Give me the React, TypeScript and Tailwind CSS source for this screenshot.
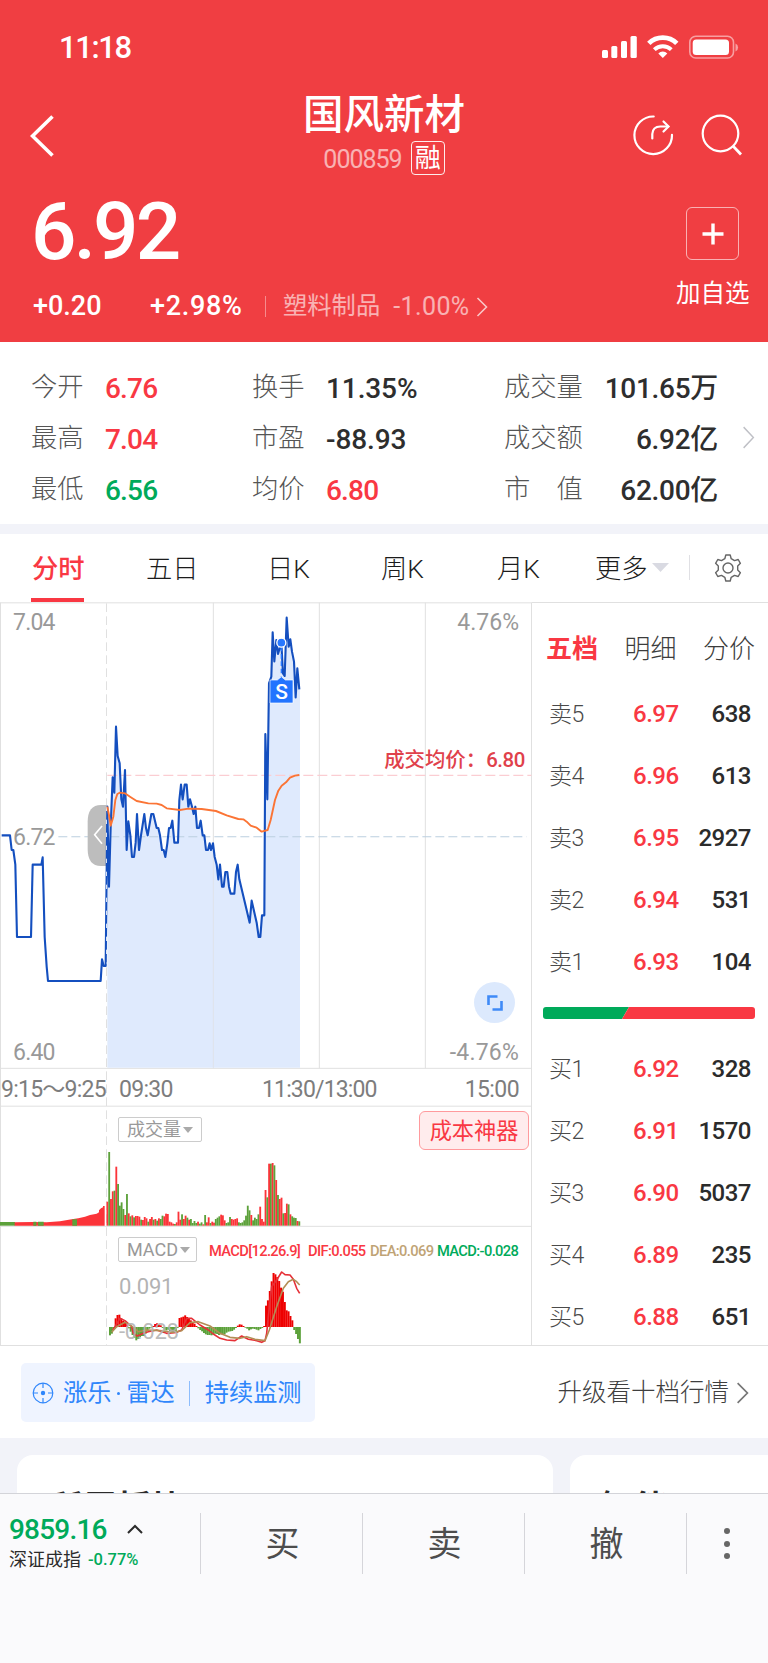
import type { ReactNode } from "react";

type Pt = [number, number];

const PRICE: Pt[] = [
  [5, 2506], [30, 2506], [35, 2550], [40, 2550], [46, 2594], [51, 2811], [93, 2811], [98, 2594], [124, 2594],
  [128, 2572], [134, 2811], [140, 2900], [144, 2943], [302, 2943], [306, 2878], [311, 2898], [317, 2898],
  [322, 2420], [327, 2660], [332, 2480], [338, 2332], [343, 2378], [348, 2180], [353, 2268], [359, 2290],
  [364, 2398], [369, 2420], [375, 2310], [380, 2550], [385, 2464], [391, 2506], [396, 2571], [402, 2571],
  [407, 2528], [411, 2442], [417, 2550], [423, 2506], [433, 2442], [438, 2484], [443, 2506], [454, 2442],
  [460, 2442], [470, 2484], [475, 2484], [480, 2506], [486, 2550], [491, 2550], [496, 2571], [502, 2530],
  [507, 2484], [512, 2484], [517, 2462], [523, 2528], [534, 2528], [538, 2400], [543, 2354], [548, 2398],
  [554, 2354], [560, 2354], [565, 2420], [570, 2398], [576, 2420], [581, 2442], [586, 2420], [591, 2484],
  [597, 2484], [602, 2462], [608, 2506], [613, 2506], [618, 2550], [624, 2550], [629, 2530], [633, 2550],
  [639, 2530], [644, 2571], [650, 2594], [655, 2638], [660, 2594], [666, 2660], [671, 2660], [676, 2616],
  [682, 2616], [687, 2660], [692, 2681], [703, 2681], [708, 2616], [713, 2594], [718, 2638], [749, 2768],
  [755, 2702], [770, 2768], [776, 2811], [781, 2811], [786, 2746], [793, 2746], [796, 2202], [802, 2398],
  [807, 2050], [814, 2030], [818, 1897], [823, 1984], [829, 1920], [834, 1962], [844, 1928], [849, 2020],
  [854, 2028], [860, 1853], [866, 1940], [871, 1918], [876, 1955], [882, 1985], [887, 2092], [892, 2005],
  [898, 2068],
];

const AVERAGE: Pt[] = [
  [322, 2420], [327, 2445], [332, 2477], [340, 2450], [346, 2400], [352, 2382], [360, 2378], [375, 2380],
  [390, 2390], [410, 2403], [445, 2410], [470, 2411], [485, 2415], [500, 2425], [540, 2430], [565, 2426],
  [605, 2427], [648, 2433], [680, 2446], [715, 2457], [730, 2458], [740, 2465], [752, 2477], [770, 2483],
  [785, 2495], [803, 2490], [812, 2460], [825, 2400], [835, 2372], [845, 2357], [858, 2347], [870, 2333],
  [885, 2327], [898, 2325],
];

const DIF: Pt[] = [
  [338, 690], [345, 680], [360, 655], [375, 662], [395, 680], [400, 700], [412, 708], [430, 700], [445, 695],
  [470, 690], [500, 700], [530, 697], [545, 690], [560, 655], [575, 655], [600, 675], [625, 690], [640, 702],
  [660, 715], [680, 720], [705, 722], [725, 708], [745, 718], [770, 722], [785, 727], [795, 722], [800, 700],
  [805, 650], [815, 560], [830, 540], [845, 516], [855, 524], [870, 525], [880, 538], [890, 565], [899, 580],
];

const DEA: Pt[] = [
  [335, 697], [350, 680], [375, 667], [395, 678], [415, 695], [440, 690], [480, 692], [520, 697], [545, 692],
  [570, 668], [595, 665], [630, 678], [660, 700], [690, 712], [720, 715], [740, 710], [765, 718], [795, 722],
  [808, 690], [830, 620], [850, 565], [865, 545], [880, 538], [890, 545], [899, 555],
];

// Volume per minute: positive values are up bars, negative ones are down bars.
const VOLUME = [
  72, -221, 80, 103, -105, 177, -125, -60, -70, -50, 32, -95, 37, -28, 31, -25, 29, 29, 27, -18, 17, 26, 22, -12,
  20, 26, -18, 20, -15, 22, -20, -30, 28, 36, 35, 12, 10, 6, -5, 10, 42, 18, -34, 20, 30, -24, 18, -20, -8,
  -14, -8, 12, -6, -10, 4, -32, 10, 25, -8, 12, 9, -20, -24, -28, 33, 31, 16, -8, -10, -26, 20, 18, 20, 22, -10,
  -8, -10, -16, -30, -60, -46, 32, -16, -24, -20, -34, 57, 20, 12, 107, -85, 186, -186, 188, -181, 137, -92, 80, 84,
  -37, 38, 66, -64, 34, -28, -24, -23, 14, -13,
];

const MACD = [
  -25, -20, -3, 26, 36, 37, 26, 18, 16, 8, -4, -14, -24, -32, -40, -36, -30, -27, -27, -20, -12, -5, -2, 3, 9, 11,
  8, 5, -3, -8, -10, -8, -12, -14, -16, -12, -3, 27, 29, 31, 35, 30, 26, 20, 14, 10, 3, -4, -9, -13, -18, -22, -24,
  -24, -25, -24, -20, -21, -24, -22, -23, -22, -17, -14, -13, -12, -8, -3, 4, 8, 7, 3, -2, -5, -10, -7, -5, -6, -8,
  -10, -6, -3, 3, 64, 80, 108, 137, 162, 158, 150, 138, 118, 106, 75, 50, 47, 33, 20, -9, -21, -36, -49,
];

const line = (pts: Pt[]) => pts.map((p) => p.join(",")).join(" ");

function Chevron({ className, width = 1.6 }: { className: string; width?: number }) {
  return (
    <svg className={className} viewBox="0 0 12 20" preserveAspectRatio="none" fill="none" stroke="currentColor" strokeWidth={width}>
      <path d="M1.5 1 10.5 10 1.5 19" />
    </svg>
  );
}

function Caret({ className }: { className: string }) {
  return (
    <svg className={className} viewBox="0 0 16 9" preserveAspectRatio="none" fill="currentColor">
      <path d="M0 0h16L8 9z" />
    </svg>
  );
}

function StatusBar() {
  return (
    <div className="flex h-[94px] items-center justify-between pr-[29px] pl-[59px]">
      <span className="text-[31px] leading-none font-medium tracking-[-1.4px]">11:18</span>
      <svg className="h-[24px] w-[138px]" viewBox="601 35 138 24" fill="white">
        <rect x="602" y="50" width="6" height="8" rx="1.5" />
        <rect x="611.3" y="46" width="6" height="12" rx="1.5" />
        <rect x="621" y="41" width="6" height="17" rx="1.5" />
        <rect x="630.5" y="36" width="6.3" height="22" rx="1.5" />
        <g fill="none" stroke="white">
          <path d="M648.8 43.4a20 20 0 0 1 28 0" strokeWidth="4.8" />
          <path d="M654.3 49.6a12.500 12.500 0 0 1 17 0" strokeWidth="4" />
        </g>
        <path d="M662.8 58l-4.500-4.600a6.500 6.500 0 0 1 9 0z" />
        <rect x="689.8" y="36.300" width="43.700" height="21.700" rx="6" fill="none" stroke="white" strokeOpacity=".5" strokeWidth="1.600" />
        <rect x="692.7" y="39.500" width="36.300" height="15.500" rx="3.500" />
        <path d="M735.500 43.500q2.600 1.200 2.600 4t-2.600 4z" opacity=".5" />
      </svg>
    </div>
  );
}

function Header() {
  return (
    <header className="flex h-[342px] flex-col bg-[#f03e42] text-white">
      <StatusBar />
      <div className="flex h-[84px] items-start justify-between pr-[25px] pl-[30px]">
        <svg className="mt-[21px] h-[42px] w-[26px]" viewBox="0 0 26 42" fill="none" stroke="white" strokeWidth="3.600">
          <path d="M22.500 1.500 2.500 21l20 19.500" />
        </svg>
        <div className="ml-[80px] flex flex-col items-center">
          <h1 className="mt-[2px] text-[40.500px] leading-[38px] font-medium">国风新材</h1>
          <div className="mt-[7px] flex items-center gap-[9px]">
            <span className="mt-[2px] text-[25px] leading-none tracking-[-1px] opacity-60">000859</span>
            <span className="flex h-[34px] w-[34px] items-center justify-center rounded-[4px] border border-white/90 text-[26px] leading-none">
              融
            </span>
          </div>
        </div>
        <div className="mt-[20px] flex gap-[27px]">
          <svg className="h-[42px] w-[42px]" viewBox="632 114 42 42" fill="none" stroke="white" strokeWidth="2.200" strokeLinecap="round">
            <path d="M653.700 116.500a18.800 18.800 0 1 0 18.300 18.300" />
            <path d="M652.300 138.500v-4.500q.5-7.500 8-7.500h8" />
            <path d="M663.500 121.500l5 5-5 5" />
          </svg>
          <svg className="h-[42px] w-[42px]" viewBox="701 114 42 42" fill="none" stroke="white" strokeWidth="2.200">
            <circle cx="720.500" cy="133.500" r="17.800" />
            <path d="M733 146l8 8.500" strokeWidth="2.800" />
          </svg>
        </div>
      </div>
      <div className="flex flex-1 justify-between pr-[18.500px] pl-[33px]">
        <div className="flex flex-col">
          <div className="mt-[14px] -ml-[2px] text-[80px] leading-[80px] font-medium tracking-[-2.800px]">6.92</div>
          <div className="mt-[20px] flex h-[29px] items-center leading-none">
            <span className="w-[117px] text-[27px] font-medium">+0.20</span>
            <span className="w-[115px] text-[27px] font-medium tracking-[.7px]">+2.98%</span>
            <span className="h-[21px] w-px bg-white/40" />
            <span className="ml-[17px] text-[24.300px] opacity-60">塑料制品</span>
            <span className="ml-[13px] text-[25px] tracking-[.4px] opacity-60">-1.00%</span>
            <Chevron className="ml-[6px] h-[20px] w-[12px] opacity-70" />
          </div>
        </div>
        <div className="mt-[29px] flex flex-col items-center">
          <div className="flex size-[53px] items-center justify-center rounded-[6px] border border-white/60">
            <svg className="size-[22px]" viewBox="0 0 22 22" stroke="white" strokeWidth="3.400">
              <path d="M11 .5v21M.5 11h21" />
            </svg>
          </div>
          <span className="mt-[22px] text-[24.500px] leading-none">加自选</span>
        </div>
      </div>
    </header>
  );
}

const RED = "text-[#f93843]";
const GREEN = "text-[#00aa5a]";
const DARK = "text-[#2e2e2e]";

const STATS = [
  ["今开", "6.76", RED, "换手", "11.35%", DARK, "成交量", "101.65万"],
  ["最高", "7.04", RED, "市盈", "-88.93", DARK, "成交额", "6.92亿"],
  ["最低", "6.56", GREEN, "均价", "6.80", RED, "市　值", "62.00亿"],
];

function StatLabel({ className, children }: { className: string; children: ReactNode }) {
  return <span className={`mb-[4px] text-[26.300px] font-light tracking-normal text-[#555] ${className}`}>{children}</span>;
}

function Stats() {
  return (
    <section className="flex h-[182px] items-center justify-between bg-white pt-[8px] pr-[13px] pl-[31px]">
      <div className="mt-[6px] flex flex-col">
        {STATS.map((r) => (
          <div key={r[0]} className="flex h-[51.300px] items-center text-[28px] leading-none font-medium tracking-[-.3px]">
            <StatLabel className="w-[74px]">{r[0]}</StatLabel>
            <span className={`w-[147px] tracking-[-.8px] ${r[2]}`}>{r[1]}</span>
            <StatLabel className="w-[74px]">{r[3]}</StatLabel>
            <span className={`w-[178px] ${r[5] === RED ? "tracking-[-.8px]" : "tracking-[-.1px]"} ${r[5]}`}>{r[4]}</span>
            <StatLabel className="w-[84px]">{r[6]}</StatLabel>
            <span className="w-[130px] text-right text-[#2e2e2e]">{r[7]}</span>
          </div>
        ))}
      </div>
      <Chevron className="h-[23px] w-[13px] text-[#bfc0c6]" width={1.3} />
    </section>
  );
}

function Tabs() {
  return (
    <nav className="flex h-[68px] items-start bg-white pl-[31px] text-[26.300px] leading-[70px] font-light text-[#1c1c1c]">
      <span className={`h-[68px] w-[53px] border-b-4 border-[#f93843] pl-px font-medium whitespace-nowrap ${RED}`}>分时</span>
      <span className="ml-[62px] w-[53px]">五日</span>
      <span className="ml-[68px] w-[43px]">日K</span>
      <span className="ml-[71px] w-[43px]">周K</span>
      <span className="ml-[73px] w-[43px]">月K</span>
      <span className="ml-[55px] w-[53px]">更多</span>
      <Caret className="mt-[29px] ml-[4px] h-[9px] w-[17px] text-[#d9dae2]" />
      <span className="mt-[21px] ml-[20px] h-[25px] w-px bg-[#e0e0e4]" />
      <svg className="mt-[20px] ml-[24px] h-[28px] w-[28px]" viewBox="0 0 28 28" fill="none" stroke="#666" strokeWidth="1.400" strokeLinejoin="round">
        <path d="M11.800 1h4.400l1 3.700 3.300 1.900 3.700-1.100 2.200 3.800-2.700 2.700v4l2.700 2.700-2.200 3.800-3.700-1.100-3.300 1.900-1 3.700h-4.400l-1-3.700-3.300-1.900-3.700 1.100-2.200-3.800L4.300 16v-4L1.600 9.300l2.200-3.800 3.700 1.100 3.300-1.900z" />
        <circle cx="14" cy="14" r="5" />
      </svg>
    </nav>
  );
}

function Tag({ className, children }: { className: string; children: ReactNode }) {
  return <span className={`absolute whitespace-nowrap leading-none ${className}`}>{children}</span>;
}

function Chart() {
  return (
    <div className="relative h-[744px] w-[532px]">
      <svg className="h-[744px] w-[532px]" viewBox="0 1806 1596 2232" fill="none">
        <g stroke="#e0e0e0" strokeWidth="3">
          <path d="M0 1808.500H1596M0 3205H1596M0 3318.500H1596M0 3679H1596M0 4036.500H1596" />
          <path d="M1.500 1808V4037M1594.500 1808V4037M640 1808V3205M958 1808V3205M1276 1808V3205" />
          <path d="M319.500 1810V4035" strokeDasharray="26 13" />
        </g>
        <polygon points={`322,3203 ${line(PRICE.slice(17))} 900,2068 900,3203`} fill="#dfeafd" />
        <path d="M640 2530V3203" stroke="#dfe2ea" strokeWidth="3" />
        <path d="M322 2326H1594" stroke="#fbcdd2" strokeWidth="3.500" strokeDasharray="30 12" />
        <path d="M175 2510H1580" stroke="#bccfe0" strokeWidth="3.200" strokeDasharray="27 12" />
        <path d="M263 2466q0-51 40-51h17v183h-17q-40 0-40-51z" fill="#bdbdbd" />
        <path d="M306 2478 284 2504 306 2531" stroke="#fff" strokeWidth="5" />
        <polyline points={line(PRICE)} stroke="#144fbf" strokeWidth="6.300" strokeLinejoin="round" />
        <path d="M319.500 2420V2890" stroke="#fff" strokeWidth="2.500" strokeDasharray="13 26" />
        <polyline points={line(AVERAGE)} stroke="#fb7435" strokeWidth="5.700" strokeLinejoin="round" />
        <path d="M844 1940V2030" stroke="#2878ff" strokeWidth="4" strokeDasharray="14 8" />
        <circle cx="844" cy="1928" r="13.500" fill="#2878ff" stroke="#fff" strokeWidth="4" />
        <path d="M810 2040H832L844 2030 856 2040H879V2109H810z" fill="#2274ff" stroke="#fff" strokeWidth="2" />
        <path d="M0 3677V3666H45V3677z" fill="#5ca13a" />
        <path
          d="M44 3677V3667L100 3666 140 3667 180 3664 215 3658 235 3655 255 3650 270 3645 290 3641 297 3637 297 3631 303 3625 309 3622 309 3618 314 3618V3677z"
          fill="#fb3439"
        />
        <path d="M100 3677V3665H109V3677zM114 3677V3665H131V3677zM217 3677V3658H231V3677z" fill="#5ca13a" />
        {VOLUME.map((v, i) => (
          <rect key={i} x={319.5 + i * 5.33} y={3677 - Math.abs(v)} width="5.500" height={Math.abs(v)} fill={v > 0 ? "#fb3439" : "#5ca13a"} />
        ))}
        {MACD.map((v, i) => (
          <rect key={i} x={327 + i * 5.64} y={v > 0 ? 3981 - v : 3981} width="5.900" height={Math.abs(v)} fill={v > 0 ? "#ee0000" : "#5ca13a"} />
        ))}
        <g transform="translate(0 3300)" strokeWidth="4.800" strokeLinejoin="round">
          <polyline points={line(DIF)} stroke="#e63037" />
          <polyline points={line(DEA)} stroke="#b38d55" />
        </g>
      </svg>

      <Tag className="top-[9px] left-[13px] text-[23px] tracking-[-.8px] text-[#999]">7.04</Tag>
      <Tag className="top-[224px] left-[13px] text-[23px] tracking-[-.8px] text-[#999]">6.72</Tag>
      <Tag className="top-[439px] left-[13px] text-[23px] tracking-[-.8px] text-[#999]">6.40</Tag>
      <Tag className="top-[9px] right-[13px] text-[23px] text-[#999]">4.76%</Tag>
      <Tag className="top-[439px] right-[13px] text-[23px] tracking-[.2px] text-[#999]">-4.76%</Tag>
      <Tag className="top-[148px] right-[7px] flex text-[20.400px] font-medium text-[#e0414b]">
        <span>成交均价：</span>
        <span className="tracking-[-.4px]">6.80</span>
      </Tag>
      <Tag className="top-[79.500px] left-[271px] w-[21px] text-center text-[21px] font-medium text-white">S</Tag>
      <span className="absolute top-[380px] left-[474px] flex size-[41px] items-center justify-center rounded-full bg-[#dce9fd]">
        <svg className="size-[16px]" viewBox="0 0 16 16" fill="none" stroke="#3f8af7" strokeWidth="2.600">
          <path d="M1.500 10V1.500H10.500M14.500 6v8.500H5.500" />
        </svg>
      </span>

      <Tag className="top-[475.500px] left-[1px] text-[23px] tracking-[-.75px] text-[#7d7d7d]">9:15～9:25</Tag>
      <Tag className="top-[475.500px] left-[119px] text-[23px] tracking-[-.7px] text-[#7d7d7d]">09:30</Tag>
      <Tag className="top-[475.500px] left-[262px] text-[23px] tracking-[-.85px] text-[#7d7d7d]">11:30/13:00</Tag>
      <Tag className="top-[475.500px] right-[13px] text-[23px] tracking-[-.6px] text-[#7d7d7d]">15:00</Tag>

      <Tag className="top-[515px] left-[118px] flex h-[25px] w-[84px] items-center rounded-[2px] border border-[#ccc] bg-white pl-[8px] text-[18px] text-[#999]">
        成交量
        <Caret className="ml-[2px] h-[6px] w-[10px] text-[#aaa]" />
      </Tag>
      <Tag className="top-[509px] left-[419px] flex h-[39px] w-[110px] items-center justify-center rounded-[6px] border border-[#ff9a9d] bg-[#ffeced] pt-px text-[22.200px] text-[#f93843]">
        成本神器
      </Tag>
      <Tag className="top-[635px] left-[118px] flex h-[25px] w-[79px] items-center rounded-[2px] border border-[#ccc] bg-white pl-[8px] text-[18px] text-[#999]">
        MACD
        <Caret className="ml-[2px] h-[6px] w-[10px] text-[#aaa]" />
      </Tag>
      <Tag className="top-[641.500px] left-[209px] flex text-[14.700px] font-medium tracking-[-.62px]">
        <span className="w-[99px] tracking-[-.65px] text-[#f93843]">MACD[12.26.9]</span>
        <span className="w-[62px] text-[#f93843]">DIF:0.055</span>
        <span className="w-[67px] text-[#bfa375]">DEA:0.069</span>
        <span className="text-[#00aa5a]">MACD:-0.028</span>
      </Tag>
      <Tag className="top-[674px] left-[119px] text-[22px] tracking-[-.2px] text-[#b3b3b3]">0.091</Tag>
      <Tag className="top-[719px] left-[119px] text-[22px] tracking-[-.3px] text-[#b3b3b3]/90">-0.028</Tag>
    </div>
  );
}

const ASKS = [
  ["卖5", "6.97", "638"],
  ["卖4", "6.96", "613"],
  ["卖3", "6.95", "2927"],
  ["卖2", "6.94", "531"],
  ["卖1", "6.93", "104"],
];

const BIDS = [
  ["买1", "6.92", "328"],
  ["买2", "6.91", "1570"],
  ["买3", "6.90", "5037"],
  ["买4", "6.89", "235"],
  ["买5", "6.88", "651"],
];

function Level({ row }: { row: string[] }) {
  return (
    <div className="flex h-[62px] items-center pr-[17px] pl-[17px] text-[24px] leading-none font-medium tracking-[-.5px]">
      <span className="w-[84px] text-[23px] font-light text-[#4a4a4a]">{row[0]}</span>
      <span className={`w-[46px] ${RED}`}>{row[1]}</span>
      <span className="flex-1 text-right text-[#2b2b2b]">{row[2]}</span>
    </div>
  );
}

function OrderBook() {
  return (
    <aside className="h-[744px] flex-1 border-y border-[#e0e0e0] bg-white">
      <div className="mt-[33px] flex justify-between pr-[13px] pl-[14px] text-[26px] leading-[26px] font-light text-[#3c3c3c]">
        <span className={`font-bold ${RED}`}>五档</span>
        <span>明细</span>
        <span>分价</span>
      </div>
      <div className="mt-[21px]">
        {ASKS.map((r) => (
          <Level key={r[0]} row={r} />
        ))}
      </div>
      <svg className="mt-[14px] ml-[11px] h-[12px] w-[212px] rounded-[3px]" viewBox="0 0 212 12">
        <path d="M0 0H86L79 12H0z" fill="#00aa5a" />
        <path d="M86 0H212V12H79z" fill="#f93843" />
      </svg>
      <div className="mt-[19px]">
        {BIDS.map((r) => (
          <Level key={r[0]} row={r} />
        ))}
      </div>
    </aside>
  );
}

function Radar() {
  return (
    <section className="flex h-[92px] items-center justify-between bg-white pt-px pr-[19px] pl-[21px]">
      <div className="flex h-[59px] w-[294px] items-center rounded-[5px] bg-[#eff4ff] pt-px pl-[11px] text-[24.200px] leading-none whitespace-nowrap text-[#2f86fb]">
        <svg className="size-[22px]" viewBox="0 0 22 22" fill="none" stroke="currentColor" strokeWidth="1.200">
          <circle cx="11" cy="11" r="9.800" />
          <path d="M11 1v5M11 16v5M1 11h5M16 11h5" />
          <circle cx="11" cy="11" r="2.200" fill="currentColor" stroke="none" />
        </svg>
        <span className="ml-[9px]">涨乐</span>
        <span className="mx-[6px] size-[3px] rounded-full bg-[#2f86fb]" />
        <span>雷达</span>
        <span className="ml-[14px] h-[25px] w-px bg-[#8dbdfd]" />
        <span className="ml-[15px]">持续监测</span>
      </div>
      <div className="flex items-center pt-px text-[24.500px] leading-none font-light text-[#3f3f3f]">
        升级看十档行情
        <Chevron className="ml-[7px] h-[22px] w-[13px] text-[#777]" />
      </div>
    </section>
  );
}

function Cards() {
  return (
    <section className="flex h-[55px] gap-[17px] overflow-hidden bg-[#f2f3f9] pt-[17px] pl-[17px] text-[34px] leading-[34px] font-bold text-[#2b2b2b]">
      <div className="h-[80px] w-[536px] shrink-0 rounded-t-[16px] bg-white pt-[36px] pl-[32px]">所属板块</div>
      <div className="h-[80px] w-[260px] shrink-0 rounded-t-[16px] bg-white pt-[36px] pl-[31px]">智能</div>
    </section>
  );
}

function ActionBar() {
  return (
    <footer className="flex flex-1 items-start border-t border-[#d3d4d9] bg-[#fafafc] pt-[19px]">
      <div className="flex h-[61px] w-[200px] flex-col pl-[9px]">
        <div className={`mt-[3px] flex items-center text-[28px] leading-[28px] font-medium tracking-[-.8px] ${GREEN}`}>
          9859.16
          <svg className="mb-[3px] ml-[20px] h-[10px] w-[16px]" viewBox="0 0 16 10" fill="none" stroke="#2b2b2b" strokeWidth="2">
            <path d="M1 9 8 2l7 7" />
          </svg>
        </div>
        <div className="mt-[6px] flex items-center gap-[7px] text-[18px] leading-[20px] text-[#2b2b2b]">
          深证成指
          <span className={`text-[16.500px] font-medium ${GREEN}`}>-0.77%</span>
        </div>
      </div>
      {["买", "卖", "撤"].map((t) => (
        <button key={t} className="flex h-[61px] w-[162px] items-center justify-center border-l border-[#d5d5da] pl-[2px] text-[34px] leading-none text-[#4d4d4d]">
          {t}
        </button>
      ))}
      <div className="flex h-[61px] flex-1 flex-col items-center justify-center gap-[6.400px] border-l border-[#d5d5da] pr-px">
        <span className="size-[6px] rounded-full bg-[#666]" />
        <span className="size-[6px] rounded-full bg-[#666]" />
        <span className="size-[6px] rounded-full bg-[#666]" />
      </div>
    </footer>
  );
}

export default function App() {
  return (
    <main className="flex h-[1663px] w-[768px] flex-col overflow-hidden bg-white font-['Roboto','Noto_Sans_CJK_SC',sans-serif]">
      <Header />
      <Stats />
      <div className="h-[10px] bg-[#f2f3f9]" />
      <Tabs />
      <section className="flex">
        <Chart />
        <OrderBook />
      </section>
      <Radar />
      <Cards />
      <ActionBar />
    </main>
  );
}
